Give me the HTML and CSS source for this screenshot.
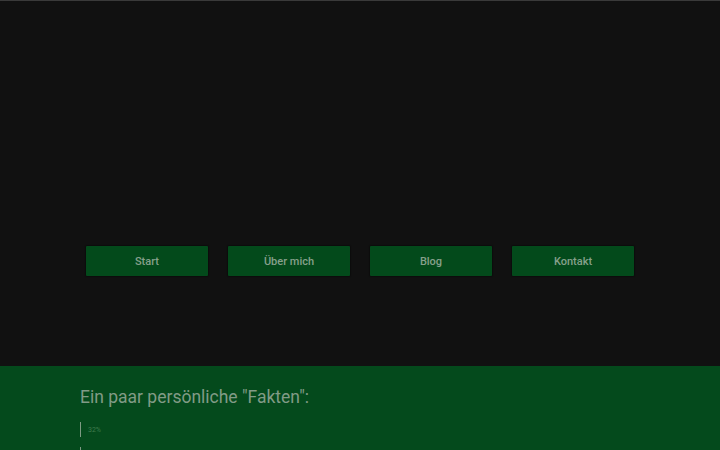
FILE: index.html
```html
<!DOCTYPE html>
<html lang="de">
<head>
<meta charset="utf-8">
<link rel="stylesheet" href="styles.css">
</head>
<body>
<header class="hero">
  <nav class="nav">
    <a class="nav-btn" href="#">Start</a>
    <a class="nav-btn" href="#">Über mich</a>
    <a class="nav-btn" href="#">Blog</a>
    <a class="nav-btn" href="#">Kontakt</a>
  </nav>
</header>
<section class="facts">
  <div class="container">
    <h2 class="facts-title">Ein paar persönliche "Fakten":</h2>
    <div class="bar"><span class="bar-label">32%</span></div>
    <div class="bar"><span class="bar-label"></span></div>
  </div>
</section>
</body>
</html>
```
FILE: styles.css
```css
html, body {
  margin: 0;
  padding: 0;
  background: #111111;
  font-family: Roboto, "Liberation Sans", sans-serif;
  overflow: hidden;
}
.hero {
  border-top: 1px solid #3a3a3a;
  box-sizing: border-box;
  height: 366px;
  padding-top: 245px;
}
.nav {
  display: flex;
  justify-content: center;
  gap: 20px;
}
.nav-btn {
  width: 122px;
  height: 30px;
  display: flex;
  align-items: center;
  justify-content: center;
  background: #034a1b;
  color: #86a08b;
  font-size: 11px;
  font-weight: 500;
  text-decoration: none;
  border-radius: 1px;
  box-shadow: 0 0 1px 1px rgba(0,0,0,0.3);
}
.facts {
  background: #044a1c;
  height: 200px;
}
.container {
  width: 560px;
  margin: 0 auto;
  padding-top: 20px;
}
.facts-title {
  margin: 0;
  font-size: 17.5px;
  font-weight: 400;
  color: #819b86;
  line-height: 22px;
}
.bar {
  margin-top: 14px;
  height: 15px;
  border-left: 1px solid #7e9a83;
  padding-left: 7px;
  display: flex;
  align-items: center;
}
.bar + .bar {
  margin-top: 10px;
}
.bar-label {
  font-size: 7px;
  color: #3f7a4c;
}
```
